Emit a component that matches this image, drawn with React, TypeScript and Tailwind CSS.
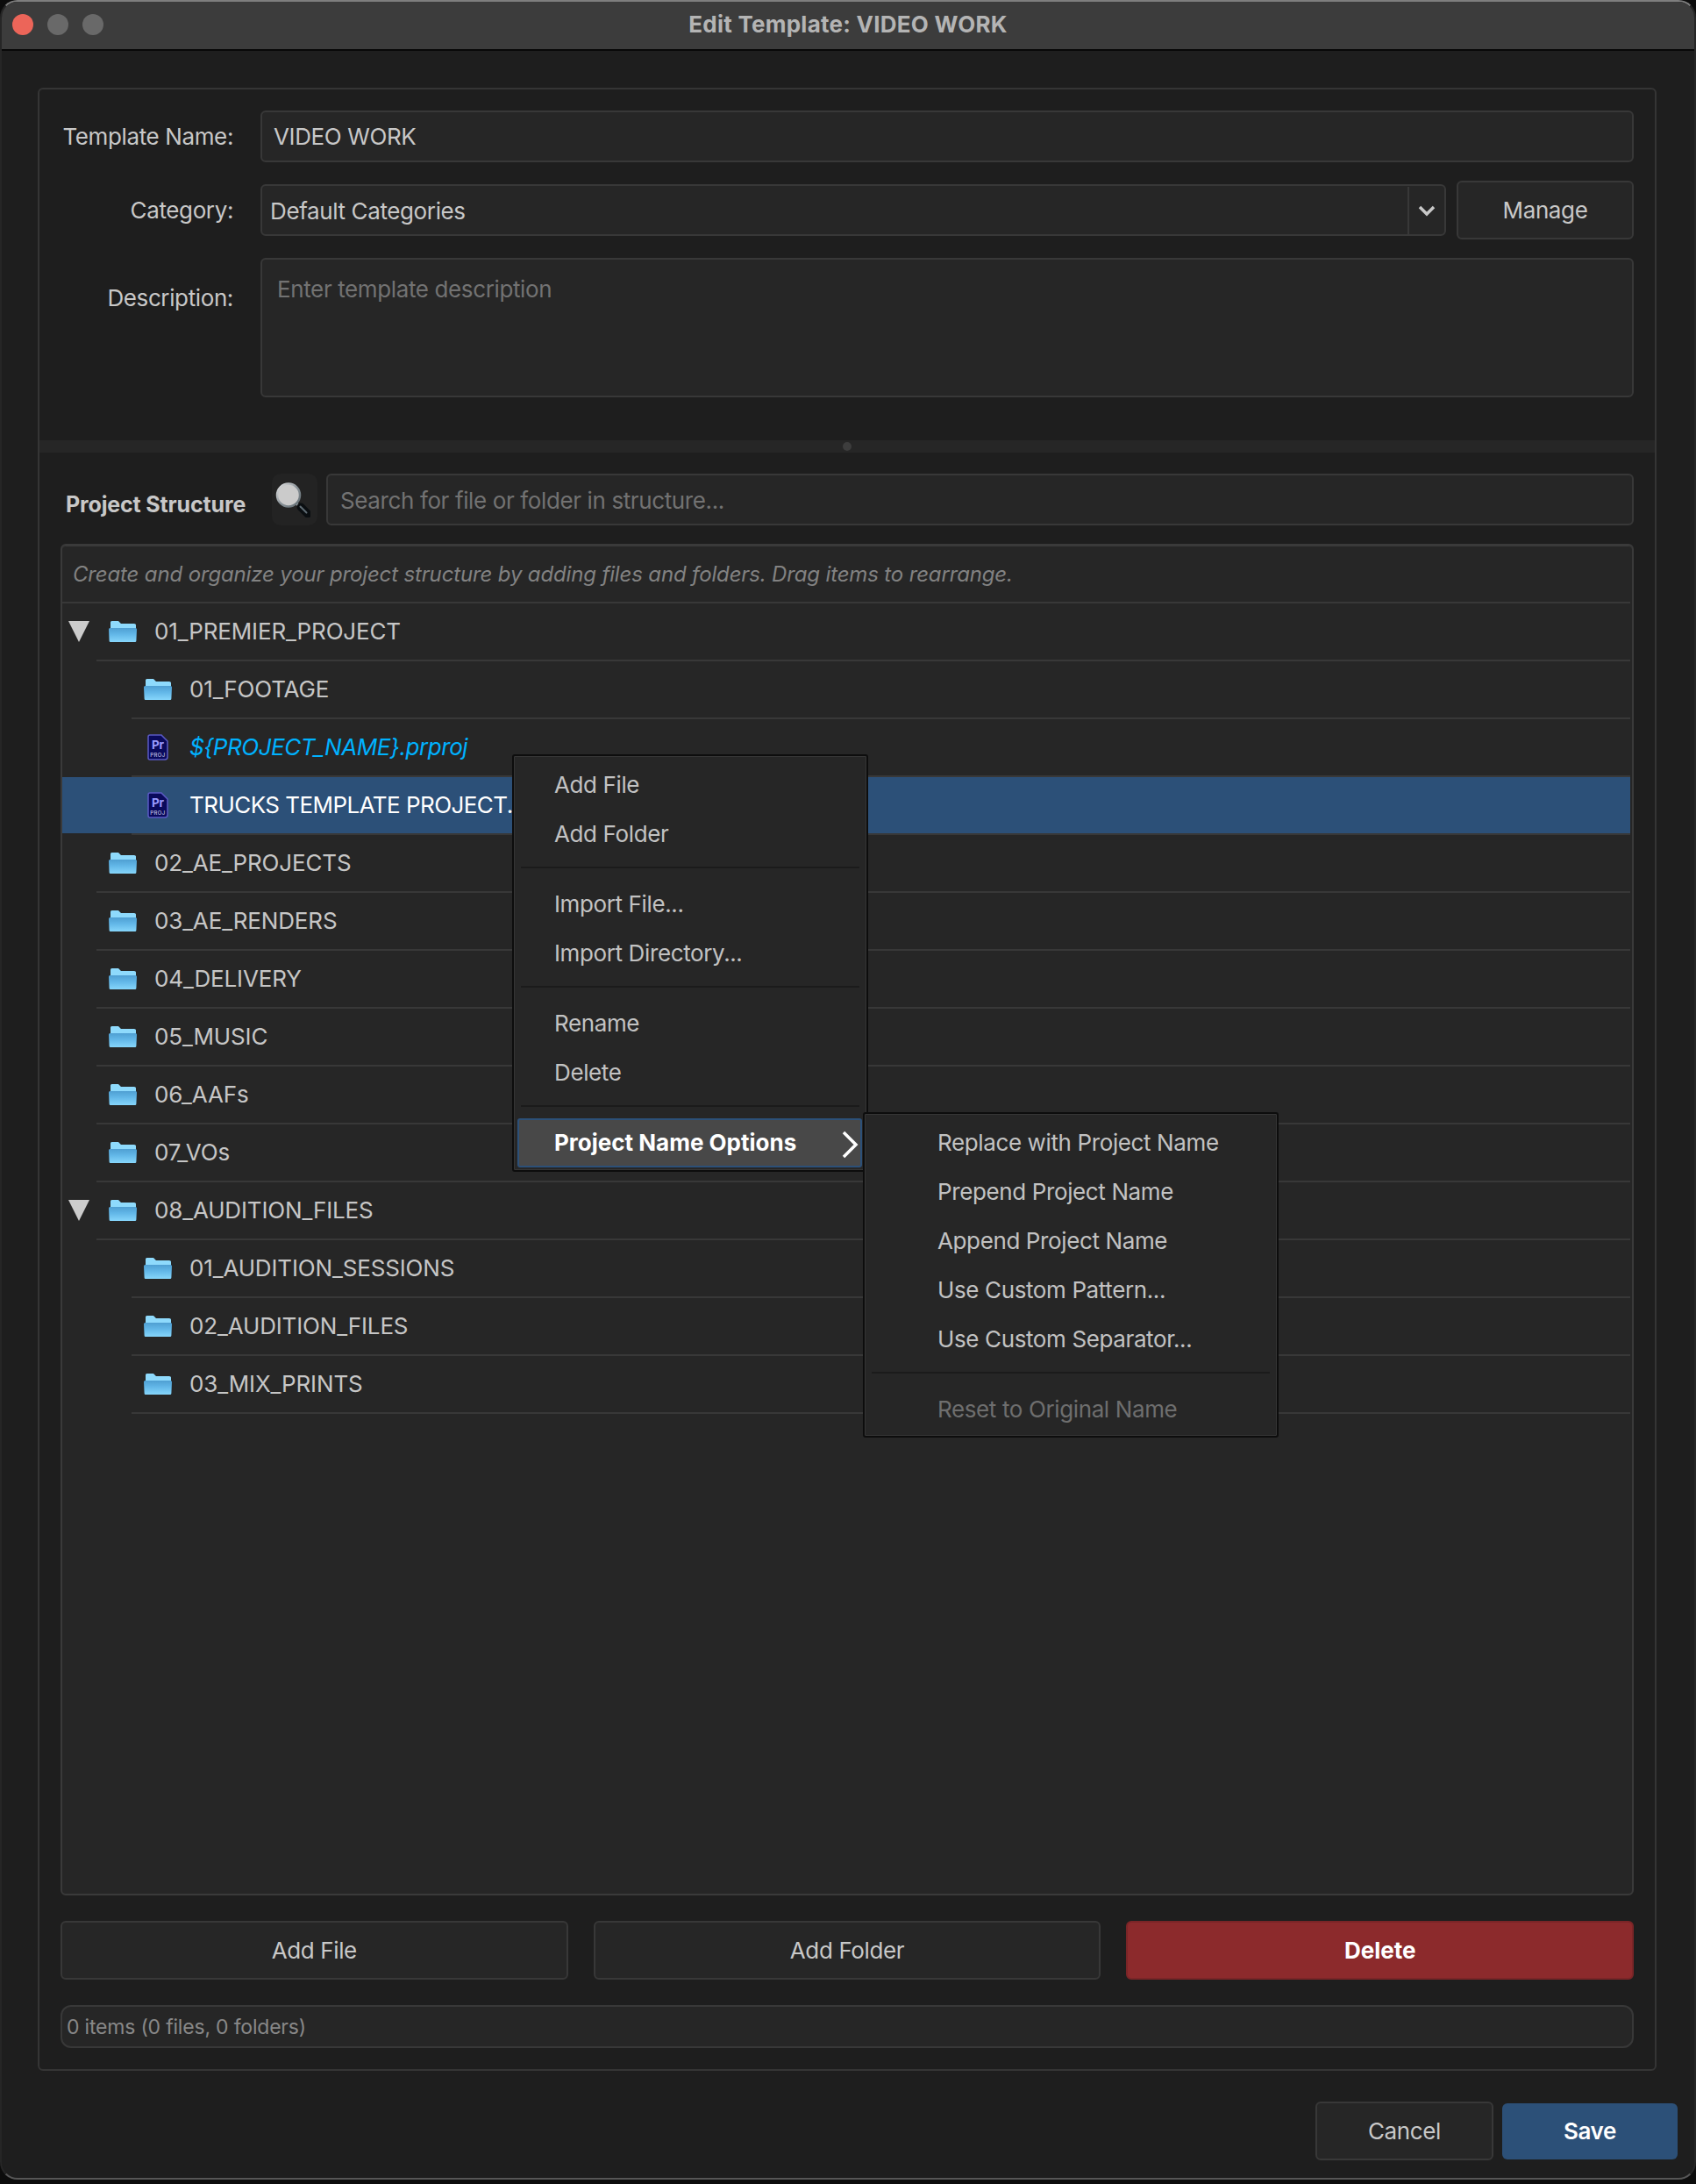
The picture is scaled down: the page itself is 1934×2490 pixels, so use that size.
const folderRows = [
  { name: '01_PREMIER_PROJECT', level: 0, open: true, icon: 'folder' },
  { name: '01_FOOTAGE', level: 1, icon: 'folder' },
  { name: '${PROJECT_NAME}.prproj', level: 1, icon: 'pr', template: true },
  { name: 'TRUCKS TEMPLATE PROJECT.prproj', level: 1, icon: 'pr', selected: true },
  { name: '02_AE_PROJECTS', level: 0, icon: 'folder' },
  { name: '03_AE_RENDERS', level: 0, icon: 'folder' },
  { name: '04_DELIVERY', level: 0, icon: 'folder' },
  { name: '05_MUSIC', level: 0, icon: 'folder' },
  { name: '06_AAFs', level: 0, icon: 'folder' },
  { name: '07_VOs', level: 0, icon: 'folder' },
  { name: '08_AUDITION_FILES', level: 0, open: true, icon: 'folder' },
  { name: '01_AUDITION_SESSIONS', level: 1, icon: 'folder' },
  { name: '02_AUDITION_FILES', level: 1, icon: 'folder' },
  { name: '03_MIX_PRINTS', level: 1, icon: 'folder' },
];

function FolderIcon() {
  return (
    <svg width="32" height="24" viewBox="0 0 32 24" className="shrink-0">
      <defs>
        <linearGradient id="folderFront" x1="0" y1="0" x2="0" y2="1">
          <stop offset="0" stopColor="#4f9fd2" />
          <stop offset="0.45" stopColor="#62b7e8" />
          <stop offset="1" stopColor="#86d6fb" />
        </linearGradient>
      </defs>
      <path d="M2 5V1.5Q2 0 3.5 0H11L14 3H29Q31 3 31 4.5V10H2Z" fill="#8edafc" />
      <path d="M1.5 8H30.5Q32 8 32 9.5L31.4 22.5Q31.4 24 30 24H2Q0.6 24 0.6 22.5L0 9.5Q0 8 1.5 8Z" fill="url(#folderFront)" />
    </svg>
  );
}

function PrIcon() {
  return (
    <svg width="24" height="30" viewBox="0 0 24 30" className="shrink-0">
      <path d="M3 1H16L23 8V26Q23 29 20 29H3Q1 29 1 27V3Q1 1 3 1Z" fill="#0a0a5c" stroke="#5a5ac4" strokeWidth="1.5" />
      <text x="12" y="16.5" textAnchor="middle" fontSize="13.5" fontStyle="normal" fontWeight="700" letterSpacing="0" fill="#9a9aff" fontFamily="Inter, sans-serif">Pr</text>
      <text x="12" y="25.5" textAnchor="middle" fontSize="6" fontStyle="normal" fontWeight="500" letterSpacing="0.4" fill="#c4c4e8" fontFamily="Inter, sans-serif">PROJ</text>
    </svg>
  );
}

function SearchIcon() {
  return (
    <svg width="40" height="40" viewBox="0 0 40 40" fill="none">
      <defs>
        <linearGradient id="ring" x1="0" y1="0" x2="1" y2="1">
          <stop offset="0" stopColor="#e6e6e6" />
          <stop offset="0.5" stopColor="#8b949a" />
          <stop offset="1" stopColor="#5f6a70" />
        </linearGradient>
      </defs>
      <path d="M24 24L29 29" stroke="#9aa2a6" strokeWidth="3" />
      <path d="M29 28L37 36" stroke="#0a0e11" strokeWidth="9" strokeLinecap="round" />
      <path d="M28.5 27.5L35.5 34.5" stroke="#5f6b73" strokeWidth="2" strokeLinecap="round" />
      <circle cx="15" cy="14.5" r="13" fill="#cbcbcb" stroke="url(#ring)" strokeWidth="2.5" />
    </svg>
  );
}

function TreeRow({ row }: { row: (typeof folderRows)[number] }) {
  const tone = row.selected
    ? 'bg-[#2c5078] text-white tracking-[-0.55px]'
    : row.template
      ? 'italic text-[#00b2ff] tracking-[-0.45px]'
      : 'text-[#c6c6c6] tracking-[-0.15px]';
  return (
    <div className="flex h-[66px] flex-col">
      <div className={`flex min-h-0 flex-1 items-center whitespace-nowrap ${tone}`}>
        {row.level === 0 ? (
          <div className="flex w-[53px] shrink-0 justify-start pl-[7px]">
            {row.open && <div className="h-0 w-0 border-x-[12px] border-t-[24px] border-x-transparent border-t-[#cccccc]" />}
          </div>
        ) : (
          <div className={row.icon === 'pr' ? 'w-[97px] shrink-0' : 'w-[93px] shrink-0'} />
        )}
        {row.icon === 'folder' ? <FolderIcon /> : <PrIcon />}
        <span className={`pb-[1px] ${row.icon === 'pr' ? 'ml-[24px]' : 'ml-[20px]'}`}>{row.name}</span>
      </div>
      <div className={`h-[2px] shrink-0 bg-[#383838] ${row.level === 0 ? 'ml-[39px]' : 'ml-[79px]'}`} />
    </div>
  );
}

function MenuItem({ label, left = 'pl-[46px]', disabled = false }: { label: string; left?: string; disabled?: boolean }) {
  return <div className={`flex h-[56px] items-center pb-[2px] ${left} ${disabled ? 'text-[#6e6e6e]' : 'text-[#c2c2c2]'}`}>{label}</div>;
}

function MenuSeparator() {
  return (
    <div className="flex h-[24px] items-center px-[8px] pb-[4px]">
      <div className="h-[2px] w-full bg-[#1b1b1b]" />
    </div>
  );
}

function FormRow({ label, children, top = false }: { label: string; children: React.ReactNode; top?: boolean }) {
  return (
    <div className={`flex ${top ? 'items-start' : 'items-center'}`}>
      <div className={`w-[197px] shrink-0 whitespace-nowrap text-right text-[#c8c8c8] ${top ? 'pt-[26px]' : ''}`}>{label}</div>
      <div className="ml-[31px] min-w-0 flex-1">{children}</div>
    </div>
  );
}

function GhostButton({ label, className = '' }: { label: string; className?: string }) {
  return (
    <div className={`flex h-[67px] items-center justify-center rounded-[6px] border-2 border-[#383838] bg-[#262626] text-[#c8c8c8] ${className}`}>
      {label}
    </div>
  );
}

export default function App() {
  return (
    <div className="h-[2490px] w-[1934px] overflow-hidden bg-[#0c0c0c] text-[26px] tracking-[-0.38px] font-['Inter',sans-serif]">
      <div className="flex h-[2485px] flex-col overflow-hidden rounded-[20px] border-2 border-[#262626] border-b-[#565656] border-t-[#7e7e7e] bg-[#1e1e1e]">
        {/* title bar */}
        <div className="relative flex h-[56px] shrink-0 items-center justify-center border-b-2 border-[#080808] bg-[#3c3c3c]">
          <div className="absolute left-[12px] top-[14px] flex gap-[16px]">
            <div className="h-[24px] w-[24px] rounded-full bg-[#ec6559]" />
            <div className="h-[24px] w-[24px] rounded-full bg-[#696969]" />
            <div className="h-[24px] w-[24px] rounded-full bg-[#696969]" />
          </div>
          <span className="pb-[3px] font-bold tracking-[0.25px] text-[#b4b4b4]">Edit Template: VIDEO WORK</span>
        </div>

        <div className="flex flex-1 flex-col pl-[41px] pr-[43px] pt-[42px]">
          <div className="flex h-[2261px] flex-col rounded-[6px] border-2 border-[#353535]">
            {/* template details */}
            <div className="flex h-[400px] shrink-0 flex-col pl-[24px] pr-[24px] pt-[24px]">
              <FormRow label="Template Name:">
                <div className="flex h-[59px] items-center rounded-[6px] border-2 border-[#383838] bg-[#262626] pl-[13px] text-[#c8c8c8]">VIDEO WORK</div>
              </FormRow>
              <div className="mt-[21px]">
                <FormRow label="Category:">
                  <div className="flex items-center gap-[12px]">
                    <div className="flex h-[59px] min-w-0 flex-1 items-center rounded-[6px] border-2 border-[#383838] bg-[#262626] pl-[9px] pt-[1px] text-[#c8c8c8]">
                      <span className="flex-1">Default Categories</span>
                      <div className="flex h-full w-[42px] items-center justify-center border-l-2 border-[#383838]">
                        <svg width="20" height="14" viewBox="0 0 20 14" fill="none">
                          <path d="M2 3L10 11L18 3" stroke="#c8c8c8" strokeWidth="3.5" />
                        </svg>
                      </div>
                    </div>
                    <GhostButton label="Manage" className="w-[202px] shrink-0" />
                  </div>
                </FormRow>
              </div>
              <div className="mt-[21px]">
                <FormRow label="Description:" top>
                  <div className="h-[159px] rounded-[6px] border-2 border-[#383838] bg-[#262626] pl-[17px] pt-[14px] text-[#727272]">Enter template description</div>
                </FormRow>
              </div>
            </div>

            {/* splitter */}
            <div className="flex h-[14px] shrink-0 items-center justify-center bg-[#262626]">
              <div className="h-[10px] w-[10px] rounded-full bg-[#3d3d3d]" />
            </div>

            {/* project structure */}
            <div className="flex min-h-0 flex-1 flex-col pb-[24px] pl-[24px] pr-[24px] pt-[24px]">
              <div className="flex h-[59px] shrink-0 items-center">
                <div className="w-[241px] shrink-0 pl-[6px] pt-[13px] text-[25px] font-bold tracking-[-0.15px] text-[#c8c8c8]">Project Structure</div>
                <div className="flex h-[59px] w-[52px] shrink-0 items-center justify-center rounded-[10px] bg-[#232323] pr-[5px]">
                  <SearchIcon />
                </div>
                <div className="ml-[10px] flex h-[59px] flex-1 items-center rounded-[6px] border-2 border-[#383838] bg-[#262626] pl-[14px] pt-[2px] text-[#727272]">
                  Search for file or folder in structure...
                </div>
              </div>

              <div className="relative mt-[21px] h-[1541px] shrink-0 rounded-[6px] border-2 border-[#3a3a3a] bg-[#262626] pr-[2px] shadow-[inset_0_1px_0_#3a3a3a]">
                <div className="flex h-[66px] flex-col">
                  <div className="flex min-h-0 flex-1 items-center pl-[12px] pt-[1px] text-[24px] italic tracking-[-0.15px] text-[#828282]">
                    Create and organize your project structure by adding files and folders. Drag items to rearrange.
                  </div>
                  <div className="h-[2px] shrink-0 bg-[#383838]" />
                </div>
                {folderRows.map((row) => (
                  <TreeRow key={row.name} row={row} />
                ))}

                {/* context menu */}
                <div className="absolute left-[513px] top-[238px] h-[476px] w-[406px] rounded-[3px] border-2 border-[#0d0d0d] bg-[#262626] pt-[5px] shadow-[inset_0_0_0_1px_#353535]">
                  <MenuItem label="Add File" />
                  <MenuItem label="Add Folder" />
                  <MenuSeparator />
                  <MenuItem label="Import File..." />
                  <MenuItem label="Import Directory..." />
                  <MenuSeparator />
                  <MenuItem label="Rename" />
                  <MenuItem label="Delete" />
                  <MenuSeparator />
                  <div className="relative ml-[4px] mr-[5px] flex h-[56px] items-center rounded-[3px] border-2 border-[#2c5078] bg-[#484848] pb-[2px] pl-[40px] font-bold tracking-normal text-white">
                    Project Name Options
                    <svg width="20" height="32" viewBox="0 0 20 32" fill="none" className="absolute right-[2px] top-[12px]">
                      <path d="M3 2L17 16L3 30" stroke="#ffffff" strokeWidth="3.5" />
                    </svg>
                  </div>
                </div>

                {/* submenu */}
                <div className="absolute left-[913px] top-[646px] h-[371px] w-[474px] rounded-[3px] border-2 border-[#0d0d0d] bg-[#262626] pt-[5px] shadow-[inset_0_0_0_1px_#353535]">
                  <MenuItem label="Replace with Project Name" left="pl-[83px]" />
                  <MenuItem label="Prepend Project Name" left="pl-[83px]" />
                  <MenuItem label="Append Project Name" left="pl-[83px]" />
                  <MenuItem label="Use Custom Pattern..." left="pl-[83px]" />
                  <MenuItem label="Use Custom Separator..." left="pl-[83px]" />
                  <MenuSeparator />
                  <MenuItem label="Reset to Original Name" left="pl-[83px]" disabled />
                </div>
              </div>

              <div className="mt-[29px] flex shrink-0 gap-[29px]">
                <GhostButton label="Add File" className="flex-1" />
                <GhostButton label="Add Folder" className="flex-1" />
                <div className="flex h-[67px] flex-1 items-center justify-center rounded-[6px] border-2 border-[#7a2527] bg-[#8c2a2c] font-bold tracking-normal text-white">Delete</div>
              </div>

              <div className="mt-[29px] flex h-[49px] shrink-0 items-center rounded-[12px] border-2 border-[#383838] bg-[#262626] pl-[5px] pt-[1px] text-[23px] tracking-[-0.2px] text-[#888888]">
                0 items (0 files, 0 folders)
              </div>
            </div>
          </div>

          {/* dialog buttons */}
          <div className="mt-[35px] flex items-center justify-end">
            <GhostButton label="Cancel" className="w-[203px]" />
            <div className="ml-[10px] mr-[-24px] flex h-[64px] w-[200px] items-center justify-center rounded-[6px] bg-[#2c5078] font-semibold text-white">Save</div>
          </div>
        </div>
      </div>
    </div>
  );
}
